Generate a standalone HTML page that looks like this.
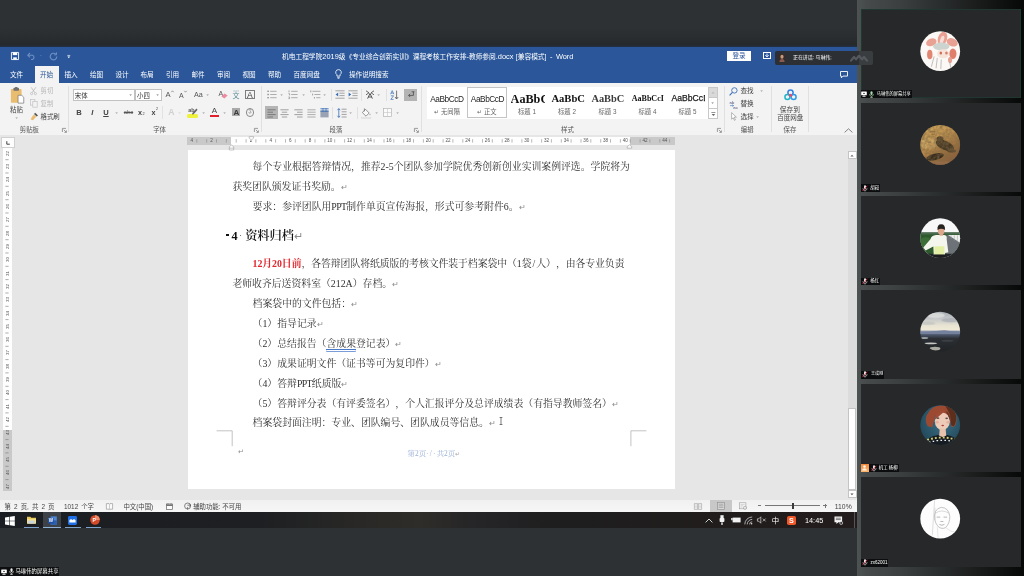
<!DOCTYPE html>
<html lang="zh-CN">
<head>
<meta charset="utf-8">
<title>Word - 屏幕共享</title>
<style>
html,body{margin:0;padding:0;background:#2d3134;}
#all{position:absolute;left:0;top:0;width:1024px;height:576px;overflow:hidden;filter:blur(0.5px);will-change:transform;}
body{width:1024px;height:576px;overflow:hidden;position:relative;background:#2d3134;
 font-family:"Liberation Sans","Noto Sans CJK SC",sans-serif;color:#333;}
.a{position:absolute;white-space:nowrap;}
.t{position:absolute;white-space:nowrap;line-height:1;}
svg{position:absolute;overflow:visible;}
/* word window */
#title{left:0;top:47px;width:857px;height:36px;background:#2b579a;}
#ribbon{left:0;top:83px;width:857px;height:52px;background:#f3f3f3;}
#docbg{left:0;top:135px;width:857px;height:365px;background:#e6e6e6;}
#page{left:188px;top:149.5px;width:486.5px;height:339px;background:#fff;}
#status{left:0;top:499.8px;width:857px;height:12.2px;background:linear-gradient(#f0f0f0,#f6f6f6);}
#taskbar{left:0;top:511.6px;width:857px;height:16.4px;background:#1d2023;}
.doc{font-family:"Liberation Serif","Noto Serif CJK SC",serif;font-size:9.85px;color:#303030;text-spacing-trim:space-all;}
.pm{color:#8a8a8a;font-size:7.6px;letter-spacing:0}
.tab{top:72.1px;font-size:6.6px;color:#fff;}
.rl{font-size:6.4px;color:#444;}
.gl{font-size:6.4px;color:#555;top:127.2px;}
.sep{position:absolute;top:86px;width:1px;height:46px;background:#e0e0e0;}
.st1{top:95px;font-size:8.3px;color:#262626;letter-spacing:-0.45px}
.st2{font-family:"Liberation Serif",serif;font-weight:bold;color:#111;}
.sl{top:109px;font-size:6.3px;color:#666;text-align:center}
.hr{top:138.6px;width:10px;text-align:center;font-size:4.6px;color:#555}
.vr{left:2px;width:10px;height:5px;line-height:5px;text-align:center;font-size:4.4px;color:#555;transform:rotate(-90deg)}
.sb{top:503.7px;font-size:6.4px;color:#444}
.la{font-size:7.4px}
/* right panel */
.nt{font-size:4.4px;color:#fff}

.av{position:absolute;left:920px;width:40px;height:40px;border-radius:50%;overflow:hidden;}
.nm{position:absolute;left:861px;height:8px;background:#0c0d0e;color:#fff;font-size:4.6px;line-height:8px;white-space:nowrap;}
</style>
</head>
<body>
<div id="all">
<!-- ===== top dark area ===== -->
<div class="a" style="left:0;top:0;width:857px;height:47px;background:linear-gradient(#2d3133 0,#2d3133 28px,#2a2d2f 38px,#26292c 45px,#20304a 47px)"></div>

<!-- ===== WORD WINDOW ===== -->
<div class="a" id="title"></div>
<div class="a" id="ribbon"></div>
<div class="a" id="docbg"></div>
<div class="a" id="page"></div>
<div class="a" id="status"></div>
<div class="a" id="taskbar"></div>


<!-- quick access icons -->
<svg style="left:11.4px;top:51.8px" width="8" height="8" viewBox="0 0 9 9"><path d="M0.5 0.5h8v8h-8z" fill="none" stroke="#fff" stroke-width="1"/><rect x="2" y="0.5" width="5" height="3" fill="#fff"/><rect x="2.5" y="6" width="4" height="2.5" fill="#fff"/></svg>
<svg style="left:27px;top:52px" width="9" height="8" viewBox="0 0 9 8"><path d="M1 3.2h4.5a2.3 2.3 0 0 1 0 4.3H4" fill="none" stroke="#6d8fc4" stroke-width="1.1"/><path d="M3 1L0.8 3.2L3 5.4" fill="none" stroke="#6d8fc4" stroke-width="1.1"/></svg>
<div class="t" style="left:40px;top:53px;font-size:5px;color:#6d8fc4">-</div>
<svg style="left:49px;top:51.5px" width="9" height="9" viewBox="0 0 9 9"><path d="M6.8 2.2A3.3 3.3 0 1 0 7.8 4.6" fill="none" stroke="#6d8fc4" stroke-width="1.1"/><path d="M7.5 0.4v2.4H5.2" fill="none" stroke="#6d8fc4" stroke-width="1"/></svg>
<svg style="left:66.6px;top:54.6px" width="3.6" height="3.6" viewBox="0 0 5 5"><path d="M0.5 0.6h4" stroke="#fff" stroke-width="0.9"/><path d="M0.6 2.2h3.8L2.5 4.4z" fill="#fff"/></svg>
<div class="t" style="left:282px;top:53px;font-size:6.73px;color:#fff;line-height:8px">机电工程学院<span class="la">2019</span>级《专业综合创新实训》课程考核工作安排<span class="la">-</span>教师参阅<span class="la">.docx</span><span style="padding-left:2.4px">[兼容模式]</span><span class="la" style="padding:0 3.4px 0 3.6px">-</span><span class="la">Word</span></div>
<div class="a" style="left:727px;top:50.5px;width:24px;height:10.5px;background:#fff"></div>
<div class="t" style="left:732.5px;top:52.6px;font-size:6.6px;color:#2b579a">登录</div>
<svg style="left:763px;top:52px" width="8" height="7" viewBox="0 0 8 7"><rect x="0.5" y="0.5" width="7" height="6" fill="none" stroke="#fff" stroke-width="1"/><path d="M2.3 3.2L4 4.9L5.7 3.2M4 1.6V4.6" fill="none" stroke="#fff" stroke-width="0.9"/></svg>
<!-- tabs -->
<div class="a" style="left:34.5px;top:66px;width:24px;height:17px;background:#f3f3f3"></div>
<div class="t tab" style="left:10px">文件</div>
<div class="t tab" style="left:40px;color:#2b579a">开始</div>
<div class="t tab" style="left:64.5px">插入</div>
<div class="t tab" style="left:90px">绘图</div>
<div class="t tab" style="left:115.5px">设计</div>
<div class="t tab" style="left:140.5px">布局</div>
<div class="t tab" style="left:166px">引用</div>
<div class="t tab" style="left:191.5px">邮件</div>
<div class="t tab" style="left:217px">审阅</div>
<div class="t tab" style="left:242.5px">视图</div>
<div class="t tab" style="left:268px">帮助</div>
<div class="t tab" style="left:293.5px">百度网盘</div>
<svg style="left:335px;top:68.5px" width="7" height="10" viewBox="0 0 7 10"><path d="M3.5 0.6a2.8 2.8 0 0 0-1.6 5.1v1.4h3.2V5.7A2.8 2.8 0 0 0 3.5 0.6z" fill="none" stroke="#fff" stroke-width="0.8"/><path d="M2.2 8.4h2.6M2.6 9.4h1.8" stroke="#fff" stroke-width="0.7"/></svg>
<div class="t tab" style="left:349px">操作说明搜索</div>
<svg style="left:840px;top:70.8px" width="8" height="8" viewBox="0 0 8 8"><path d="M0.5 0.5h7v4.6H3L1.4 6.8V5.1H0.5z" fill="none" stroke="#fff" stroke-width="0.9"/></svg>



<!-- ===== Clipboard group ===== -->
<svg style="left:10.4px;top:87px" width="15" height="16.6" viewBox="0 0 16 18">
 <rect x="0.8" y="2.2" width="11.6" height="15" rx="0.8" fill="#e9bd70"/>
 <rect x="3.6" y="0.8" width="6" height="3.2" rx="0.8" fill="#6f6f6f"/>
 <rect x="5.2" y="0" width="2.8" height="2" rx="0.8" fill="#6f6f6f"/>
 <path d="M8.6 9h4l2.2 2.2v6.3H8.6z" fill="#fff" stroke="#6a6a6a" stroke-width="0.7"/>
</svg>
<div class="t rl" style="left:10px;top:106.7px">粘贴</div>
<svg style="left:15.4px;top:116.8px" width="3.2" height="2.4" viewBox="0 0 4 3"><path d="M0.4 0.5L2 2.2L3.6 0.5z" fill="#959595"/></svg>
<!-- cut / copy / format painter -->
<svg style="left:30px;top:87px" width="7" height="8" viewBox="0 0 7 8"><path d="M1.2 0.3L4.8 5.6M5.8 0.3L2.2 5.6" stroke="#b9b9b9" stroke-width="0.8" fill="none"/><circle cx="1.6" cy="6.6" r="1.1" fill="none" stroke="#b9b9b9" stroke-width="0.7"/><circle cx="5.4" cy="6.6" r="1.1" fill="none" stroke="#b9b9b9" stroke-width="0.7"/></svg>
<div class="t rl" style="left:40.5px;top:88px;color:#b5b5b5">剪切</div>
<svg style="left:30px;top:99px" width="8" height="9" viewBox="0 0 8 9"><rect x="0.5" y="0.5" width="4.4" height="5.6" fill="#f3f3f3" stroke="#c2c2c2" stroke-width="0.7"/><rect x="2.8" y="2.6" width="4.4" height="5.6" fill="#f3f3f3" stroke="#c2c2c2" stroke-width="0.7"/></svg>
<div class="t rl" style="left:40.5px;top:100.5px;color:#b5b5b5">复制</div>
<svg style="left:30px;top:112px" width="9" height="9" viewBox="0 0 9 9"><path d="M5.2 0.8L8 3.4L6.6 4.6L4 2z" fill="#555"/><path d="M3.8 2.4L6.2 4.8L3 8.2L0.6 7.6L1.6 5.4z" fill="#e9bd70"/></svg>
<div class="t rl" style="left:40.5px;top:113.5px">格式刷</div>
<div class="t gl" style="left:19.8px">剪贴板</div>
<svg style="left:61.5px;top:128px" width="5" height="5" viewBox="0 0 5 5"><path d="M0.4 4V0.4H4" fill="none" stroke="#777" stroke-width="0.7"/><path d="M1.8 1.8L4.2 4.2M4.4 2.4V4.4H2.4" fill="none" stroke="#777" stroke-width="0.7"/></svg>
<div class="sep" style="left:68px"></div>

<!-- ===== Font group ===== -->
<div class="a" style="left:72.5px;top:89px;width:62px;height:12.2px;background:#fff;border:0.6px solid #c2c2c2;box-sizing:border-box"></div>
<div class="a" style="left:135px;top:89px;width:26.6px;height:12.2px;background:#fff;border:0.6px solid #c2c2c2;box-sizing:border-box"></div>
<div class="t rl" style="left:74.8px;top:92.7px;color:#333">宋体</div>
<svg style="left:129.4px;top:94.3px" width="3.2" height="2.4" viewBox="0 0 4 3"><path d="M0.4 0.5L2 2.2L3.6 0.5z" fill="#777"/></svg>
<div class="t rl" style="left:137px;top:92.7px;color:#333">小四</div>
<svg style="left:155.9px;top:94.3px" width="3.2" height="2.4" viewBox="0 0 4 3"><path d="M0.4 0.5L2 2.2L3.6 0.5z" fill="#777"/></svg>
<div class="t" style="left:165.5px;top:91px;font-size:7.6px;color:#555">A</div>
<svg style="left:171px;top:90px" width="3" height="3" viewBox="0 0 3 3"><path d="M0.3 2.2L1.5 0.8L2.7 2.2" fill="none" stroke="#666" stroke-width="0.6"/></svg>
<div class="t" style="left:179px;top:91.5px;font-size:7px;color:#555">A</div>
<svg style="left:184px;top:90px" width="3" height="3" viewBox="0 0 3 3"><path d="M0.3 0.8L1.5 2.2L2.7 0.8" fill="none" stroke="#666" stroke-width="0.6"/></svg>
<div class="t" style="left:194px;top:91.3px;font-size:7.2px;color:#555">Aa</div>
<svg style="left:205.9px;top:94.3px" width="3.2" height="2.4" viewBox="0 0 4 3"><path d="M0.4 0.5L2 2.2L3.6 0.5z" fill="#959595"/></svg>
<!-- clear formatting -->
<div class="t" style="left:218.5px;top:89.5px;font-size:7px;color:#555">A</div>
<svg style="left:221px;top:93px" width="7" height="6" viewBox="0 0 7 6"><path d="M3.6 0.4L6.6 2.4L3.4 5.6L0.4 3.6z" fill="#ec8aa0"/></svg>
<!-- phonetic guide -->
<div class="t" style="left:232.5px;top:91.5px;font-size:7px;color:#5a8a94;font-family:'Liberation Sans','Noto Sans CJK SC',sans-serif">文</div>
<svg style="left:232.5px;top:89.5px" width="7" height="2" viewBox="0 0 7 2"><path d="M0.5 1h6" stroke="#6a8f98" stroke-width="0.7" stroke-dasharray="1.2 0.8"/></svg>
<!-- char border -->
<div class="a" style="left:245.3px;top:90.3px;width:9.3px;height:9.2px;border:0.6px solid #7d7d7d;box-sizing:border-box"></div>
<div class="t" style="left:247.05px;top:90.7px;font-size:8.6px;color:#444">A</div>

<!-- row 2 -->
<div class="t" style="left:76.3px;top:108.6px;font-size:7.6px;font-weight:bold;color:#444">B</div>
<div class="t" style="left:91.3px;top:108.6px;font-size:7.6px;font-weight:bold;font-style:italic;color:#444">I</div>
<div class="t" style="left:103.2px;top:108.6px;font-size:7.6px;color:#444;font-weight:bold;text-decoration:underline">U</div>
<svg style="left:114.9px;top:112.3px" width="3.2" height="2.4" viewBox="0 0 4 3"><path d="M0.4 0.5L2 2.2L3.6 0.5z" fill="#959595"/></svg>
<div class="t" style="left:123.8px;top:110px;font-size:5.8px;color:#555;text-decoration:line-through;text-decoration-thickness:0.5px">abc</div>
<div class="t" style="left:138px;top:109px;font-size:7.2px;color:#444;font-weight:bold">x</div>
<div class="t" style="left:142.6px;top:113.3px;font-size:3.8px;color:#444">2</div>
<div class="t" style="left:151.4px;top:109px;font-size:7.2px;color:#444;font-weight:bold">x</div>
<div class="t" style="left:156px;top:107.5px;font-size:3.8px;color:#444">2</div>
<div class="a" style="left:162.3px;top:106px;width:1px;height:13px;background:#e2e2e2"></div>
<div class="t" style="left:168.2px;top:108.2px;font-size:8.6px;color:#cfcfcf;font-weight:bold">A</div>
<svg style="left:178.4px;top:112.3px" width="3.2" height="2.4" viewBox="0 0 4 3"><path d="M0.4 0.5L2 2.2L3.6 0.5z" fill="#d2d2d2"/></svg>
<!-- highlight -->
<div class="a" style="left:187.3px;top:114.4px;width:10.8px;height:3.6px;background:#eef23a;border-radius:1.5px"></div>
<div class="t" style="left:188.2px;top:107.6px;font-size:5.4px;color:#555;font-weight:bold">ab</div>
<svg style="left:190px;top:108px" width="8" height="8" viewBox="0 0 8 8"><path d="M6.4 0.6L7.6 1.8L3.6 6.2L2 6.6L2.4 5z" fill="#666"/></svg>
<svg style="left:201.6px;top:112.3px" width="3.2" height="2.4" viewBox="0 0 4 3"><path d="M0.4 0.5L2 2.2L3.6 0.5z" fill="#959595"/></svg>
<!-- font color -->
<div class="t" style="left:211.7px;top:107.2px;font-size:8px;color:#444">A</div>
<div class="a" style="left:210px;top:114.8px;width:9.4px;height:2.4px;background:#e0202c"></div>
<svg style="left:223.1px;top:112.3px" width="3.2" height="2.4" viewBox="0 0 4 3"><path d="M0.4 0.5L2 2.2L3.6 0.5z" fill="#959595"/></svg>
<!-- char shading -->
<div class="a" style="left:232.4px;top:108px;width:7.8px;height:8.4px;background:#a9a9a9"></div>
<div class="t" style="left:233.4px;top:108.6px;font-size:8px;color:#3a3a3a;font-weight:bold">A</div>
<!-- enclosed char -->
<div class="a" style="left:245.6px;top:108.2px;width:8.6px;height:8.6px;border:0.7px solid #8a8a8a;border-radius:50%;box-sizing:border-box"></div>
<div class="t" style="left:247.7px;top:110.2px;font-size:4.6px;color:#777">字</div>
<div class="t gl" style="left:153.2px">字体</div>
<svg style="left:253.5px;top:128px" width="5" height="5" viewBox="0 0 5 5"><path d="M0.4 4V0.4H4" fill="none" stroke="#777" stroke-width="0.7"/><path d="M1.8 1.8L4.2 4.2M4.4 2.4V4.4H2.4" fill="none" stroke="#777" stroke-width="0.7"/></svg>
<div class="sep" style="left:260.5px"></div>
<!-- ===== Paragraph group ===== -->
<!-- bullets -->
<svg style="left:266.5px;top:90px" width="10" height="9" viewBox="0 0 10 9"><g fill="#8a8a8a"><rect x="0.4" y="0.6" width="1.4" height="1.4"/><rect x="0.4" y="3.8" width="1.4" height="1.4"/><rect x="0.4" y="7" width="1.4" height="1.4"/></g><path d="M3.2 1.3h6.4M3.2 4.5h6.4M3.2 7.7h6.4" stroke="#9a9a9a" stroke-width="0.8"/></svg>
<svg style="left:280.0px;top:94.3px" width="3.2" height="2.4" viewBox="0 0 4 3"><path d="M0.4 0.5L2 2.2L3.6 0.5z" fill="#959595"/></svg>
<!-- numbering -->
<svg style="left:288px;top:90px" width="10" height="9" viewBox="0 0 10 9"><path d="M1 0.4v1.9M0.4 3.7h1.2v1.7M0.4 7h1.2v1.6H0.4" fill="none" stroke="#7a7a7a" stroke-width="0.6"/><path d="M3.2 1.3h6.4M3.2 4.5h6.4M3.2 7.7h6.4" stroke="#9a9a9a" stroke-width="0.8"/></svg>
<svg style="left:301.9px;top:94.3px" width="3.2" height="2.4" viewBox="0 0 4 3"><path d="M0.4 0.5L2 2.2L3.6 0.5z" fill="#959595"/></svg>
<!-- multilevel -->
<svg style="left:309.5px;top:90px" width="11" height="9" viewBox="0 0 11 9"><path d="M0.8 0.4v1.9M2.6 3.6v1.8M4.4 7v1.6" stroke="#7a7a7a" stroke-width="0.7"/><path d="M2.4 1.3h8M4.4 4.5h6M6.2 7.7h4.2" stroke="#9a9a9a" stroke-width="0.8"/></svg>
<svg style="left:322.6px;top:94.3px" width="3.2" height="2.4" viewBox="0 0 4 3"><path d="M0.4 0.5L2 2.2L3.6 0.5z" fill="#959595"/></svg>
<div class="a" style="left:331px;top:88.5px;width:1px;height:12.5px;background:#e0e0e0"></div>
<!-- decrease / increase indent -->
<svg style="left:334.5px;top:90px" width="10" height="9" viewBox="0 0 10 9"><path d="M0.4 0.8h9.2M4.4 3.2h5.2M4.4 5.6h5.2M0.4 8.2h9.2" stroke="#8e8e8e" stroke-width="0.8"/><path d="M3.2 2.6v3.8L0.6 4.5z" fill="#3a6fb5"/></svg>
<svg style="left:347.8px;top:90px" width="10" height="9" viewBox="0 0 10 9"><path d="M0.4 0.8h9.2M4.4 3.2h5.2M4.4 5.6h5.2M0.4 8.2h9.2" stroke="#8e8e8e" stroke-width="0.8"/><path d="M0.6 2.6v3.8L3.2 4.5z" fill="#3a6fb5"/></svg>
<div class="a" style="left:361px;top:88.5px;width:1px;height:12.5px;background:#e0e0e0"></div>
<!-- asian layout -->
<svg style="left:365px;top:90px" width="10" height="9" viewBox="0 0 10 9"><path d="M1 0.8L4 2.8L1 4.8M9 0.8L6 2.8L9 4.8" fill="none" stroke="#444" stroke-width="0.8"/><path d="M2.6 8.6L5 3.4L7.4 8.6M3.4 7h3.2" fill="none" stroke="#444" stroke-width="0.9"/></svg>
<svg style="left:377.0px;top:94.3px" width="3.2" height="2.4" viewBox="0 0 4 3"><path d="M0.4 0.5L2 2.2L3.6 0.5z" fill="#959595"/></svg>
<div class="a" style="left:385.5px;top:88.5px;width:1px;height:12.5px;background:#e0e0e0"></div>
<!-- sort -->
<svg style="left:390px;top:89.5px" width="9" height="10" viewBox="0 0 9 10"><path d="M0.6 4.2L2.2 0.6L3.8 4.2M1.1 3.1h2.2" fill="none" stroke="#3a6fb5" stroke-width="0.7"/><path d="M0.8 5.8h2.8L0.8 9.4h2.8" fill="none" stroke="#3a6fb5" stroke-width="0.7"/><path d="M6.6 0.6v8.2M5 7L6.6 9L8.2 7" fill="none" stroke="#555" stroke-width="0.8"/></svg>
<!-- show marks (active) -->
<div class="a" style="left:404.2px;top:88.7px;width:12.6px;height:12.6px;background:#b4b4b4"></div>
<svg style="left:406.5px;top:91px" width="8" height="8" viewBox="0 0 8 8"><path d="M6.4 0.8V4.4H1.6M3.2 2.8L1.6 4.4L3.2 6" fill="none" stroke="#4a4a4a" stroke-width="0.8"/><path d="M4.6 0.8h2.8" stroke="#4a4a4a" stroke-width="0.8"/></svg>

<!-- row 2 -->
<div class="a" style="left:265.1px;top:106px;width:12.8px;height:13.4px;background:#b4b4b4"></div>
<svg style="left:267px;top:108.5px" width="9" height="9" viewBox="0 0 9 9"><path d="M0.4 0.8h8.2M0.4 3.2h5.6M0.4 5.6h8.2M0.4 8h5.6" stroke="#6a6a6a" stroke-width="0.8"/></svg>
<svg style="left:280px;top:108.5px" width="9" height="9" viewBox="0 0 9 9"><path d="M0.4 0.8h8.2M1.8 3.2h5.4M0.4 5.6h8.2M1.8 8h5.4" stroke="#8a8a8a" stroke-width="0.8"/></svg>
<svg style="left:293.7px;top:108.5px" width="9" height="9" viewBox="0 0 9 9"><path d="M0.4 0.8h8.2M3 3.2h5.6M0.4 5.6h8.2M3 8h5.6" stroke="#8a8a8a" stroke-width="0.8"/></svg>
<svg style="left:306.9px;top:108.5px" width="9" height="9" viewBox="0 0 9 9"><path d="M0.4 0.8h8.2M0.4 3.2h8.2M0.4 5.6h8.2M0.4 8h8.2" stroke="#9a9a9a" stroke-width="0.8"/></svg>
<svg style="left:320px;top:108px" width="9" height="10" viewBox="0 0 9 10"><rect x="0.4" y="2.4" width="8.2" height="7" fill="#9aa3b4"/><path d="M0.4 0.8h8.2M0.4 3.2h8.2" stroke="#3a6fb5" stroke-width="0.9"/><path d="M3 0v4M6 0v4" stroke="#3a6fb5" stroke-width="0.7"/></svg>
<div class="a" style="left:331.8px;top:106.5px;width:1px;height:12.5px;background:#e0e0e0"></div>
<!-- line spacing -->
<svg style="left:336.5px;top:108px" width="10" height="10" viewBox="0 0 10 10"><path d="M1.8 0.6v8.8M0.4 2.2L1.8 0.6L3.2 2.2M0.4 7.8L1.8 9.4L3.2 7.8" fill="none" stroke="#3a6fb5" stroke-width="0.8"/><path d="M4.6 1.2h5M4.6 3.8h5M4.6 6.4h5M4.6 9h5" stroke="#8a8a8a" stroke-width="0.8"/></svg>
<svg style="left:348.8px;top:112.3px" width="3.2" height="2.4" viewBox="0 0 4 3"><path d="M0.4 0.5L2 2.2L3.6 0.5z" fill="#959595"/></svg>
<div class="a" style="left:357px;top:106.5px;width:1px;height:12.5px;background:#e0e0e0"></div>
<!-- shading bucket -->
<svg style="left:361px;top:107.5px" width="11" height="11" viewBox="0 0 11 11"><path d="M4.4 1.2L8.2 5L5 8.2L1.4 4.6z" fill="#fafafa" stroke="#6a6a6a" stroke-width="0.7"/><path d="M3.4 0.4v3" stroke="#6a6a6a" stroke-width="0.7"/><path d="M9 5.6q1 1.4 0 2q-1-0.6 0-2z" fill="#8a8a8a"/><rect x="0.6" y="9.2" width="9.4" height="1.6" fill="#ececec" stroke="#cfcfcf" stroke-width="0.3"/></svg>
<svg style="left:374.8px;top:112.3px" width="3.2" height="2.4" viewBox="0 0 4 3"><path d="M0.4 0.5L2 2.2L3.6 0.5z" fill="#959595"/></svg>
<!-- borders -->
<svg style="left:383.3px;top:108.3px" width="9" height="9" viewBox="0 0 9 9"><rect x="0.5" y="0.5" width="8" height="8" fill="#fbfbfb" stroke="#b4b4b4" stroke-width="0.7"/><path d="M4.5 0.5v8M0.5 4.5h8" stroke="#c4c4c4" stroke-width="0.6"/></svg>
<svg style="left:396.4px;top:112.3px" width="3.2" height="2.4" viewBox="0 0 4 3"><path d="M0.4 0.5L2 2.2L3.6 0.5z" fill="#959595"/></svg>
<div class="t gl" style="left:329.6px">段落</div>
<svg style="left:414px;top:128px" width="5" height="5" viewBox="0 0 5 5"><path d="M0.4 4V0.4H4" fill="none" stroke="#777" stroke-width="0.7"/><path d="M1.8 1.8L4.2 4.2M4.4 2.4V4.4H2.4" fill="none" stroke="#777" stroke-width="0.7"/></svg>
<div class="sep" style="left:420.6px"></div>
<!-- ===== Styles group ===== -->
<div class="a" style="left:426.5px;top:87px;width:281.5px;height:32.3px;background:#fff"></div>
<div class="a" style="left:708px;top:87px;width:9.5px;height:32.3px;background:#fff;border:0.6px solid #c8c8c8;box-sizing:border-box"></div>
<div class="a" style="left:708px;top:87px;width:9.5px;height:10.8px;background:#d9d9d9;border:0.6px solid #c8c8c8;box-sizing:border-box"></div>
<div class="a" style="left:708px;top:108.4px;width:9.5px;height:0.6px;background:#c8c8c8"></div>
<svg style="left:710.7px;top:91px" width="4" height="3" viewBox="0 0 4 3"><path d="M0.4 2.4L2 0.7L3.6 2.4z" fill="#b9b9b9"/></svg>
<svg style="left:711.1px;top:102.3px" width="3.2" height="2.4" viewBox="0 0 4 3"><path d="M0.4 0.5L2 2.2L3.6 0.5z" fill="#777"/></svg>
<svg style="left:710.5px;top:111.5px" width="5" height="5" viewBox="0 0 5 5"><path d="M0.4 0.5h4" stroke="#666" stroke-width="0.7"/><path d="M0.6 2L2.4 4L4.2 2z" fill="#666"/></svg>
<div class="a" style="left:467.3px;top:87.3px;width:39.8px;height:30.6px;border:1.4px solid #c4c4c4;box-sizing:border-box"></div>
<div class="t st1" style="left:430.2px">AaBbCcD</div>
<div class="t st1" style="left:470.8px">AaBbCcD</div>
<div class="t st2" style="left:510.6px;font-size:12.2px;top:93.4px;width:34px;overflow:hidden">AaBbC</div>
<div class="t st2" style="left:551.4px;font-size:10.6px;top:94.2px">AaBbC</div>
<div class="t st2" style="left:591.4px;font-size:10.4px;top:94.4px;color:#3c3c3c;font-weight:bold">AaBbC</div>
<div class="t st2" style="left:631.8px;font-size:8px;top:95px">AaBbCcI</div>
<div class="t" style="left:671.4px;font-size:8.6px;top:94.2px;color:#222;width:33.6px;overflow:hidden;letter-spacing:0.05px;-webkit-text-stroke:0.25px #222">AaBbCcD</div>
<div class="t sl" style="left:427px;width:40px">↵ 无间隔</div>
<div class="t sl" style="left:467px;width:40px">↵ 正文</div>
<div class="t sl" style="left:507px;width:40px">标题 1</div>
<div class="t sl" style="left:547px;width:40px">标题 2</div>
<div class="t sl" style="left:587.5px;width:40px">标题 3</div>
<div class="t sl" style="left:627.5px;width:40px">标题 4</div>
<div class="t sl" style="left:667.5px;width:40px">标题 5</div>
<div class="t gl" style="left:561px">样式</div>
<svg style="left:716.5px;top:128px" width="5" height="5" viewBox="0 0 5 5"><path d="M0.4 4V0.4H4" fill="none" stroke="#777" stroke-width="0.7"/><path d="M1.8 1.8L4.2 4.2M4.4 2.4V4.4H2.4" fill="none" stroke="#777" stroke-width="0.7"/></svg>
<div class="sep" style="left:723.5px"></div>

<!-- ===== Editing group ===== -->
<svg style="left:729px;top:86.5px" width="9" height="9" viewBox="0 0 9 9"><circle cx="5.4" cy="3.4" r="2.7" fill="none" stroke="#3a6fb5" stroke-width="0.9"/><path d="M3.4 5.4L0.6 8.4" stroke="#3a6fb5" stroke-width="1.1"/></svg>
<div class="t rl" style="left:740.4px;top:87.6px;font-size:6.6px">查找</div>
<svg style="left:760.1px;top:90.3px" width="3.2" height="2.4" viewBox="0 0 4 3"><path d="M0.4 0.5L2 2.2L3.6 0.5z" fill="#959595"/></svg>
<svg style="left:729px;top:99.5px" width="9" height="9" viewBox="0 0 9 9"><text x="0.4" y="4" font-size="4.2" font-family="Liberation Sans, sans-serif" fill="#7a7a9a" font-weight="bold">ab</text><path d="M1 5.6h3.4M3.4 4.6L4.6 5.6L3.4 6.6" fill="none" stroke="#3a6fb5" stroke-width="0.6"/><text x="4.2" y="8.8" font-size="4.2" font-family="Liberation Sans, sans-serif" fill="#7a7a9a" font-weight="bold">ac</text></svg>
<div class="t rl" style="left:740.4px;top:100.6px;font-size:6.6px">替换</div>
<svg style="left:731px;top:112px" width="6" height="9" viewBox="0 0 6 9"><path d="M0.6 0.6v6.6l1.6-1.4l1.2 2.6l1-0.5L3.2 5.2h2.2z" fill="#fff" stroke="#8a8a8a" stroke-width="0.6"/></svg>
<div class="t rl" style="left:740.4px;top:113.6px;font-size:6.6px">选择</div>
<svg style="left:756.1px;top:116.3px" width="3.2" height="2.4" viewBox="0 0 4 3"><path d="M0.4 0.5L2 2.2L3.6 0.5z" fill="#959595"/></svg>
<div class="t gl" style="left:740.8px">编辑</div>
<div class="sep" style="left:771px"></div>

<!-- ===== Save group ===== -->
<svg style="left:783.5px;top:89px" width="13" height="12" viewBox="0 0 13 12">
 <circle cx="6.5" cy="3.6" r="2.6" fill="none" stroke="#2f7fe6" stroke-width="1.5"/>
 <circle cx="3.4" cy="8" r="2.5" fill="none" stroke="#22b3c8" stroke-width="1.5"/>
 <circle cx="9.6" cy="8" r="2.5" fill="none" stroke="#2f9be6" stroke-width="1.5"/>
 <circle cx="6.5" cy="6.2" r="1.5" fill="#f2456b"/>
</svg>
<div class="t rl" style="left:779.8px;top:106.8px;font-size:6.7px">保存到</div>
<div class="t rl" style="left:777.2px;top:115.4px;font-size:6.5px">百度网盘</div>
<div class="t gl" style="left:783.6px">保存</div>
<div class="sep" style="left:808.3px"></div>
<svg style="left:843.5px;top:127.5px" width="9" height="5" viewBox="0 0 9 5"><path d="M0.6 4.4L4.5 0.8L8.4 4.4" fill="none" stroke="#777" stroke-width="0.9"/></svg>



<!-- ===== Rulers ===== -->
<div class="a" style="left:1px;top:136.5px;width:13.5px;height:11.5px;background:#fdfdfd;border:0.6px solid #d0d0d0;box-sizing:border-box"></div>
<svg style="left:5.5px;top:140.5px" width="4" height="4" viewBox="0 0 4 4"><path d="M0.8 0.2V3.2H3.8" fill="none" stroke="#444" stroke-width="1"/></svg>
<div class="a" style="left:187px;top:137px;width:488px;height:8px;background:#c9c9c9"></div>
<div class="a" style="left:231px;top:137px;width:398.5px;height:8px;background:#fefefe"></div>
<div class="t hr" style="left:186.9px">4</div>
<div class="t hr" style="left:206.6px">2</div>
<div class="t hr" style="left:246.0px">2</div>
<div class="t hr" style="left:265.7px">4</div>
<div class="t hr" style="left:285.4px">6</div>
<div class="t hr" style="left:305.1px">8</div>
<div class="t hr" style="left:324.8px">10</div>
<div class="t hr" style="left:344.5px">12</div>
<div class="t hr" style="left:364.2px">14</div>
<div class="t hr" style="left:383.9px">16</div>
<div class="t hr" style="left:403.6px">18</div>
<div class="t hr" style="left:423.3px">20</div>
<div class="t hr" style="left:443.0px">22</div>
<div class="t hr" style="left:462.7px">24</div>
<div class="t hr" style="left:482.4px">26</div>
<div class="t hr" style="left:502.1px">28</div>
<div class="t hr" style="left:521.8px">30</div>
<div class="t hr" style="left:541.5px">32</div>
<div class="t hr" style="left:561.2px">34</div>
<div class="t hr" style="left:580.9px">36</div>
<div class="t hr" style="left:600.6px">38</div>
<div class="t hr" style="left:620.3px">40</div>
<div class="t hr" style="left:640.0px">42</div>
<div class="t hr" style="left:659.7px">44</div>
<svg style="left:0;top:0" width="857" height="150" viewBox="0 0 857 150"><path d="M196.8 139.2v3.4M206.7 139.2v3.4M216.5 139.2v3.4M226.4 139.2v3.4M236.2 139.2v3.4M246.1 139.2v3.4M255.9 139.2v3.4M265.8 139.2v3.4M275.6 139.2v3.4M285.5 139.2v3.4M295.3 139.2v3.4M305.2 139.2v3.4M315.0 139.2v3.4M324.9 139.2v3.4M334.7 139.2v3.4M344.6 139.2v3.4M354.4 139.2v3.4M364.3 139.2v3.4M374.1 139.2v3.4M384.0 139.2v3.4M393.8 139.2v3.4M403.7 139.2v3.4M413.5 139.2v3.4M423.4 139.2v3.4M433.2 139.2v3.4M443.1 139.2v3.4M452.9 139.2v3.4M462.8 139.2v3.4M472.6 139.2v3.4M482.5 139.2v3.4M492.3 139.2v3.4M502.2 139.2v3.4M512.0 139.2v3.4M521.9 139.2v3.4M531.7 139.2v3.4M541.6 139.2v3.4M551.4 139.2v3.4M561.3 139.2v3.4M571.1 139.2v3.4M581.0 139.2v3.4M590.8 139.2v3.4M600.7 139.2v3.4M610.5 139.2v3.4M620.4 139.2v3.4M630.2 139.2v3.4M640.1 139.2v3.4M649.9 139.2v3.4M659.8 139.2v3.4M669.6 139.2v3.4" stroke="#8a8a8a" stroke-width="0.6"/><path d="M249.2 136.6h4.4v1.6l-2.2 1.8l-2.2-1.8z" fill="#fcfcfc" stroke="#8f8f8f" stroke-width="0.5"/><path d="M229.3 146.8l2.2-1.8l2.2 1.8v3.2h-4.4z" fill="#fcfcfc" stroke="#8f8f8f" stroke-width="0.5"/><path d="M229.3 148.2h4.4" stroke="#8f8f8f" stroke-width="0.5"/><path d="M627.3 146.6l2.2-1.8l2.2 1.8v1.6h-4.4z" fill="#fcfcfc" stroke="#8f8f8f" stroke-width="0.5"/></svg>
<div class="a" style="left:2.5px;top:148px;width:9px;height:342.5px;background:#c9c9c9"></div>
<div class="a" style="left:2.5px;top:148px;width:9px;height:282.2px;background:#fefefe"></div>
<div class="t vr" style="top:150.5px">22</div>
<div class="t vr" style="top:163.8px">23</div>
<div class="t vr" style="top:177.2px">24</div>
<div class="t vr" style="top:190.5px">25</div>
<div class="t vr" style="top:203.8px">26</div>
<div class="t vr" style="top:217.2px">27</div>
<div class="t vr" style="top:230.5px">28</div>
<div class="t vr" style="top:243.8px">29</div>
<div class="t vr" style="top:257.1px">30</div>
<div class="t vr" style="top:270.5px">31</div>
<div class="t vr" style="top:283.8px">32</div>
<div class="t vr" style="top:297.1px">33</div>
<div class="t vr" style="top:310.5px">34</div>
<div class="t vr" style="top:323.8px">35</div>
<div class="t vr" style="top:337.1px">36</div>
<div class="t vr" style="top:350.4px">37</div>
<div class="t vr" style="top:363.8px">38</div>
<div class="t vr" style="top:377.1px">39</div>
<div class="t vr" style="top:390.4px">40</div>
<div class="t vr" style="top:403.8px">41</div>
<div class="t vr" style="top:417.1px">42</div>
<div class="t vr" style="top:430.4px">43</div>
<div class="t vr" style="top:443.8px">44</div>
<div class="t vr" style="top:457.1px">45</div>
<div class="t vr" style="top:470.4px">46</div>
<div class="t vr" style="top:483.8px">47</div>
<svg style="left:0;top:0" width="20" height="500" viewBox="0 0 20 500"><path d="M5.4 159.7h3.2M5.4 173.0h3.2M5.4 186.3h3.2M5.4 199.7h3.2M5.4 213.0h3.2M5.4 226.3h3.2M5.4 239.7h3.2M5.4 253.0h3.2M5.4 266.3h3.2M5.4 279.6h3.2M5.4 293.0h3.2M5.4 306.3h3.2M5.4 319.6h3.2M5.4 333.0h3.2M5.4 346.3h3.2M5.4 359.6h3.2M5.4 372.9h3.2M5.4 386.3h3.2M5.4 399.6h3.2M5.4 412.9h3.2M5.4 426.3h3.2M5.4 439.6h3.2M5.4 452.9h3.2M5.4 466.3h3.2M5.4 479.6h3.2" stroke="#777" stroke-width="0.6"/></svg>

<!-- ===== Document text ===== -->
<div class="t doc" style="left:252.6px;top:162.3px">每个专业根据答辩情况，推荐2-5个团队参加学院优秀创新创业实训案例评选。学院将为</div>
<div class="t doc" style="left:232.4px;top:182.1px">获奖团队颁发证书奖励。<span class="pm">↵</span></div>
<div class="t doc" style="left:252.6px;top:201.8px">要求：参评团队用<span style="letter-spacing:-0.7px">PPT</span>制作单页宣传海报，形式可参考附件6。<span class="pm">↵</span></div>
<div class="a" style="left:226.4px;top:234px;width:2.2px;height:2.2px;background:#111"></div>
<div class="t doc" style="left:231.6px;top:229.6px;font-size:12.2px;font-weight:600;color:#111">4<span style="font-size:8px;vertical-align:1.5px;font-weight:normal;padding:0 3.2px 0 1.6px">·</span>资料归档<span class="pm" style="font-weight:normal;font-size:11px">↵</span></div>
<div class="t doc" style="left:252.6px;top:259.4px;letter-spacing:-0.055px"><span style="color:#e2262d;font-weight:bold">12月20日前</span>，各答辩团队将纸质版的考核文件装于档案袋中（1袋<span style="padding:0 1.1px">/</span>人），由各专业负责</div>
<div class="t doc" style="left:232.4px;top:279.2px">老师收齐后送资料室（212A）存档。<span class="pm">↵</span></div>
<div class="t doc" style="left:252.6px;top:299.1px">档案袋中的文件包括：<span class="pm">↵</span></div>
<div class="t doc" style="left:252.6px;top:318.9px">（1）指导记录<span class="pm">↵</span></div>
<div class="t doc" style="left:252.6px;top:338.8px">（2）总结报告（<span style="border-bottom:0.9px solid #4a78c8;box-shadow:0 1.5px 0 -0.3px #fff,0 2.2px 0 -0.3px #4a78c8;line-height:0.9;display:inline-block">含成果</span>登记表）<span class="pm">↵</span></div>
<div class="t doc" style="left:252.6px;top:358.6px">（3）成果证明文件（证书等可为复印件）<span class="pm">↵</span></div>
<div class="t doc" style="left:252.6px;top:378.5px">（4）答辩<span style="letter-spacing:-0.7px">PPT</span>纸质版<span class="pm">↵</span></div>
<div class="t doc" style="left:252.6px;top:398.6px">（5）答辩评分表（有评委签名），个人汇报评分及总评成绩表（有指导教师签名）<span class="pm">↵</span></div>
<div class="t doc" style="left:252.6px;top:418.2px">档案袋封面注明：专业、团队编号、团队成员等信息。<span class="pm">↵</span></div>
<!-- I-beam cursor -->
<svg style="left:499px;top:416.5px" width="4" height="8" viewBox="0 0 4 8"><path d="M0.6 0.5h2.8M0.6 7.5h2.8M2 0.5v7" stroke="#444" stroke-width="0.7" fill="none"/></svg>
<!-- margin crop marks -->
<svg style="left:0;top:0" width="857" height="500" viewBox="0 0 857 500"><path d="M216.6 430.8H232.2V446.2M646.4 430.8H630.9V446.2" fill="none" stroke="#b4b4b4" stroke-width="0.8"/></svg>
<div class="t doc pm" style="left:237.6px;top:447.8px;font-size:7.4px">↵</div>
<div class="t doc" style="left:407.6px;top:450.2px;font-size:7.4px;color:#9ab0d6">第2页<span style="letter-spacing:1.2px">·/·</span>共2页<span style="color:#a8a8a8;font-size:6px">↵</span></div>
<!-- vertical scrollbar -->
<div class="a" style="left:848px;top:151px;width:9px;height:347px;background:#dcdcdc"></div>
<div class="a" style="left:848px;top:151.3px;width:8.5px;height:8.2px;background:#fff;border:0.6px solid #c4c4c4;box-sizing:border-box"></div>
<svg style="left:850.3px;top:154px" width="4" height="3" viewBox="0 0 4 3"><path d="M0.4 2.4L2 0.7L3.6 2.4z" fill="#666"/></svg>
<div class="a" style="left:848px;top:408.2px;width:8.3px;height:82px;background:#fff;border:0.6px solid #c4c4c4;box-sizing:border-box"></div>
<div class="a" style="left:848px;top:490px;width:8.5px;height:8.2px;background:#fff;border:0.6px solid #c4c4c4;box-sizing:border-box"></div>
<svg style="left:850.3px;top:493px" width="4" height="3" viewBox="0 0 4 3"><path d="M0.4 0.5L2 2.2L3.6 0.5z" fill="#555"/></svg>

<!-- ===== Status bar ===== -->
<div class="t sb" style="left:4.6px;word-spacing:1.3px">第 2 页, 共 2 页</div>
<div class="t sb" style="left:64px;word-spacing:1.2px">1012 个字</div>
<svg style="left:106px;top:502.5px" width="7" height="7" viewBox="0 0 7 7"><path d="M0.4 0.6h2.6l0.5 0.6l0.5-0.6h2.6v5.6H4l-0.5 0.5L3 6.2H0.4z" fill="#fbfbfb" stroke="#8a8a8a" stroke-width="0.6"/><path d="M3.5 1.2v5" stroke="#9a9a9a" stroke-width="0.5"/></svg>
<div class="t sb" style="left:123.4px">中文(中国)</div>
<svg style="left:166px;top:502.5px" width="7" height="7" viewBox="0 0 7 7"><rect x="0.5" y="1" width="6" height="5.4" fill="#fbfbfb" stroke="#666" stroke-width="0.7"/><path d="M0.5 2.2h6" stroke="#555" stroke-width="1.2"/><path d="M2 0.3v1.2M5 0.3v1.2" stroke="#555" stroke-width="0.6"/></svg>
<svg style="left:183.5px;top:502px" width="9" height="8" viewBox="0 0 9 8"><circle cx="3.6" cy="4" r="3" fill="none" stroke="#555" stroke-width="0.7"/><path d="M3.4 3.2h3.4M5.4 1.8L6.9 3.2L5.4 4.6" fill="none" stroke="#555" stroke-width="0.7"/><path d="M3.6 5v2.6" stroke="#555" stroke-width="0.7"/></svg>
<div class="t sb" style="left:193.2px">辅助功能: 不可用</div>
<!-- view buttons -->
<svg style="left:694px;top:502.5px" width="8" height="7" viewBox="0 0 8 7"><path d="M0.4 0.6h3.2v5.8H0.4zM4.4 0.6h3.2v5.8H4.4z" fill="#fbfbfb" stroke="#9a9a9a" stroke-width="0.6"/><path d="M1 2h2M1 3.4h2M1 4.8h2M5 2h2M5 3.4h2M5 4.8h2" stroke="#b5b5b5" stroke-width="0.5"/></svg>
<div class="a" style="left:709.7px;top:499.6px;width:22px;height:12px;background:#c8c8c8"></div>
<svg style="left:717px;top:502px" width="8" height="8" viewBox="0 0 8 8"><rect x="0.5" y="0.5" width="7" height="7" fill="#d8d8d8" stroke="#8a8a8a" stroke-width="0.6"/><path d="M1.6 2.2h4.8M1.6 3.8h4.8M1.6 5.4h4.8" stroke="#8a8a8a" stroke-width="0.6"/></svg>
<svg style="left:739px;top:502px" width="8" height="8" viewBox="0 0 8 8"><rect x="0.5" y="0.8" width="6.4" height="6" fill="#fbfbfb" stroke="#9a9a9a" stroke-width="0.6"/><path d="M1.4 2.4h4.4M1.4 3.8h3M1.4 5.2h2" stroke="#aaa" stroke-width="0.5"/><circle cx="6" cy="5.8" r="1.6" fill="#e8e8e8" stroke="#888" stroke-width="0.5"/></svg>
<!-- zoom slider -->
<div class="a" style="left:757.6px;top:505.4px;width:3.6px;height:0.7px;background:#777"></div>
<div class="a" style="left:764.7px;top:505.4px;width:55.5px;height:0.7px;background:#777"></div>
<div class="a" style="left:791.8px;top:502.6px;width:2px;height:6.4px;background:#3a3a3a"></div>
<div class="a" style="left:823px;top:505.4px;width:4px;height:0.7px;background:#777"></div>
<div class="a" style="left:824.65px;top:503.7px;width:0.7px;height:4px;background:#777"></div>
<div class="t sb" style="left:834.8px;font-size:6.8px;top:503.5px">110%</div>

<!-- ===== Taskbar ===== -->
<div class="a" style="left:0;top:511.6px;width:857px;height:16.4px;background:linear-gradient(90deg,#1b1e22 0,#1d1f22 30%,#292826 42%,#2f2d29 49%,#262527 55%,#1e1e1f 65%,#201d1d 78%,#231c1c 100%)"></div>
<!-- windows logo -->
<svg style="left:4.7px;top:515.8px" width="10" height="10" viewBox="0 0 10 10"><path d="M0 1.4L4.4 0.8V4.7H0zM5 0.7L9.8 0V4.7H5zM0 5.3H4.4V9.2L0 8.6zM5 5.3H9.8V10L5 9.3z" fill="#fff"/></svg>
<!-- explorer -->
<svg style="left:27.3px;top:516.4px" width="9" height="8" viewBox="0 0 9 8"><path d="M0 0.8h3.4l0.8 1H9V7.6H0z" fill="#e6c65a"/><rect x="0" y="2.8" width="9" height="4.8" fill="#f3df86"/><rect x="1.2" y="4.6" width="6.6" height="3" fill="#c9d3de"/></svg>
<div class="a" style="left:24.2px;top:527px;width:15.2px;height:1.2px;background:#7da3cc"></div>
<!-- word (active) -->
<div class="a" style="left:43px;top:511.6px;width:18px;height:16.6px;background:#3c4248"></div>
<svg style="left:47.6px;top:516px" width="9" height="9" viewBox="0 0 9 9"><rect x="2.6" y="0.4" width="6.2" height="8.2" fill="#4f86d6"/><rect x="2.6" y="4.4" width="6.2" height="4.2" fill="#2b5fb0"/><rect x="0" y="1.8" width="5.6" height="5.6" fill="#1e4fa0"/><text x="0.7" y="6.3" font-size="4.6" font-weight="bold" font-family="Liberation Sans, sans-serif" fill="#fff">W</text></svg>
<div class="a" style="left:43px;top:527px;width:18px;height:1.2px;background:#8fb2d8"></div>
<!-- tencent meeting -->
<svg style="left:68.4px;top:516px" width="9" height="9" viewBox="0 0 9 9"><rect x="0" y="0" width="9" height="9" rx="1.4" fill="#1f6fe8"/><path d="M1.4 6.4V4.6a1.6 1.6 0 0 1 3.1-0.4a1.6 1.6 0 0 1 3.1 0.4V6.4z" fill="#fff"/></svg>
<div class="a" style="left:64.8px;top:527px;width:15.8px;height:1.2px;background:#7da3cc"></div>
<!-- powerpoint -->
<svg style="left:89.5px;top:515.4px" width="10" height="10" viewBox="0 0 10 10"><circle cx="5" cy="5" r="4.8" fill="#d24a2a"/><path d="M5 0.2A4.8 4.8 0 0 1 9.8 5H5z" fill="#f08a68"/><text x="2.6" y="7" font-size="5" font-weight="bold" font-family="Liberation Sans, sans-serif" fill="#fff">P</text></svg>
<div class="a" style="left:85.6px;top:527px;width:15.8px;height:1.2px;background:#7da3cc"></div>
<!-- tray -->
<svg style="left:704.5px;top:517.6px" width="8" height="5" viewBox="0 0 8 5"><path d="M0.6 4.4L4 1L7.4 4.4" fill="none" stroke="#fff" stroke-width="0.8"/></svg>
<svg style="left:718.6px;top:515.4px" width="6" height="10" viewBox="0 0 6 10"><rect x="1.4" y="0.2" width="3.2" height="3" fill="#f2f2f2"/><rect x="0.6" y="3" width="4.8" height="4" rx="0.8" fill="#f2f2f2"/><path d="M3 7v1.6" stroke="#ddd" stroke-width="1"/><circle cx="3" cy="9" r="0.9" fill="#ddd"/></svg>
<svg style="left:730.6px;top:517px" width="10" height="6" viewBox="0 0 10 6"><rect x="1.6" y="0.6" width="8" height="4.8" fill="#f2f2f2"/><rect x="0.2" y="1" width="1.4" height="2.2" fill="#f2f2f2"/></svg>
<svg style="left:744.4px;top:515.6px" width="9" height="9" viewBox="0 0 9 9"><path d="M0.8 8.4A7.4 7.4 0 0 1 8.2 1" fill="none" stroke="#bbb" stroke-width="0.9"/><path d="M3.2 8.4A5 5 0 0 1 8.2 3.4" fill="none" stroke="#bbb" stroke-width="0.9"/><path d="M5.6 8.4A2.6 2.6 0 0 1 8.2 5.8" fill="none" stroke="#bbb" stroke-width="0.9"/><circle cx="7.6" cy="7.8" r="0.8" fill="#ddd"/></svg>
<svg style="left:757.4px;top:516.4px" width="10" height="8" viewBox="0 0 10 8"><path d="M0.4 2.8h1.4L3.8 0.8v6.4L1.8 5.2H0.4z" fill="none" stroke="#ddd" stroke-width="0.7"/><path d="M5.8 2.6L8.6 5.4M8.6 2.6L5.8 5.4" stroke="#ddd" stroke-width="0.7"/></svg>
<div class="t" style="left:771.8px;top:516.6px;font-size:7.4px;color:#fff">中</div>
<svg style="left:787.4px;top:516px" width="9" height="9" viewBox="0 0 9 9"><rect x="0" y="0" width="9" height="9" rx="1.8" fill="#f0582a"/><text x="1.9" y="7.2" font-size="7.2" font-weight="bold" font-family="Liberation Sans, sans-serif" fill="#fff">S</text></svg>
<div class="t" style="left:805px;top:516.8px;font-size:7.3px;color:#fff">14:45</div>
<svg style="left:834px;top:516px" width="9" height="9" viewBox="0 0 9 9"><path d="M0.5 0.6h7.6v5.6H4.4L2.4 8V6.2H0.5z" fill="#f4f4f4"/><path d="M1.8 2.2h5M1.8 3.6h5" stroke="#333" stroke-width="0.6"/><circle cx="7.2" cy="7" r="1.5" fill="#333" stroke="#eee" stroke-width="0.6"/></svg>
<div class="a" style="left:853.6px;top:511.6px;width:0.6px;height:16.4px;background:#555"></div>
<!-- bottom-left caption -->
<div class="a" style="left:0;top:567.4px;width:59px;height:8.6px;background:#0d0e0f"></div>
<svg style="left:1.2px;top:568.6px" width="6" height="6" viewBox="0 0 6 6"><rect x="0.2" y="0.4" width="5.6" height="3.8" rx="0.5" fill="#fff"/><path d="M2 2.9L3 1.6L4 2.9z" fill="#222"/><path d="M1.4 5.4h3.2M3 4.2v1.2" stroke="#fff" stroke-width="0.7"/></svg>
<svg style="left:8.6px;top:568.4px" width="5" height="7" viewBox="0 0 5 7"><rect x="1.5" y="0.2" width="2" height="3.8" rx="1" fill="#e8e8e8"/><path d="M0.5 3.2a2 2 0 0 0 4 0M2.5 5.2v1.2M1.2 6.5h2.6" fill="none" stroke="#e8e8e8" stroke-width="0.6"/></svg>
<div class="t" style="left:15.4px;top:569.2px;font-size:5.4px;color:#fff">马琳伟的屏幕共享</div>

<!-- ===== Right participant panel ===== -->
<div class="a" style="left:857px;top:0;width:167px;height:576px;background:linear-gradient(90deg,#4d5253 0,#464a4b 6%,#3c4041 25%,#1c1e1e 70%,#060707 100%)"></div>
<div class="a" style="left:1020.7px;top:0;width:3.3px;height:576px;background:#070808"></div>
<div class="a" style="left:861px;top:8.8px;width:159.7px;height:89.4px;background:#26282a;box-shadow:inset 0 0 0 0.8px #1f3d35"></div>
<div class="a" style="left:861px;top:102.5px;width:159.7px;height:89.4px;background:#26282a"></div>
<div class="a" style="left:861px;top:196.2px;width:159.7px;height:89.3px;background:#26282a"></div>
<div class="a" style="left:861px;top:289.9px;width:159.7px;height:88.7px;background:#26282a"></div>
<div class="a" style="left:861px;top:383.6px;width:159.7px;height:88.8px;background:#26282a"></div>
<div class="a" style="left:861px;top:477.3px;width:159.7px;height:89.4px;background:#26282a"></div>
<svg style="left:0;top:0" width="1024" height="576" viewBox="0 0 1024 576">
<defs>
<clipPath id="c0"><circle cx="940.2" cy="51.2" r="19.9"/></clipPath>
<clipPath id="c1"><circle cx="940.2" cy="144.8" r="19.9"/></clipPath>
<clipPath id="c2"><circle cx="940.2" cy="238.2" r="19.9"/></clipPath>
<clipPath id="c3"><circle cx="940.2" cy="331.7" r="19.9"/></clipPath>
<clipPath id="c4"><circle cx="940.2" cy="425.2" r="19.9"/></clipPath>
<clipPath id="c5"><circle cx="940.2" cy="518.7" r="19.9"/></clipPath>
<linearGradient id="g2" x1="0" y1="0" x2="0.6" y2="1"><stop offset="0" stop-color="#d6ad60"/><stop offset="0.45" stop-color="#c0924f"/><stop offset="0.8" stop-color="#96693c"/><stop offset="1" stop-color="#8a5c3c"/></linearGradient>
<linearGradient id="g4" x1="0" y1="0" x2="0" y2="1"><stop offset="0" stop-color="#9da3ad"/><stop offset="0.2" stop-color="#c4c6c8"/><stop offset="0.36" stop-color="#e9e4d3"/><stop offset="0.45" stop-color="#efe9d6"/><stop offset="0.48" stop-color="#8e98ae"/><stop offset="0.56" stop-color="#4a5468"/><stop offset="0.64" stop-color="#2b2f34"/><stop offset="1" stop-color="#1e2021"/></linearGradient>
<radialGradient id="g5" cx="0.55" cy="0.4" r="0.65"><stop offset="0" stop-color="#3b7189"/><stop offset="1" stop-color="#1f4252"/></radialGradient>
<filter id="tx" x="0" y="0" width="100%" height="100%"><feTurbulence type="fractalNoise" baseFrequency="0.035" numOctaves="3" seed="4" result="n"/><feColorMatrix in="n" type="matrix" values="0 0 0 0 0.2  0 0 0 0 0.14  0 0 0 0 0.06  0.9 0.9 0 0 -0.62"/><feComposite operator="in" in2="SourceGraphic"/></filter>
<filter id="b1"><feGaussianBlur stdDeviation="6"/></filter>
<filter id="b2"><feGaussianBlur stdDeviation="3"/></filter>
</defs>
<g clip-path="url(#c0)"><g transform="translate(910,22) scale(0.1041667)"><rect x="80" y="70" width="420" height="420" fill="#fbf8f6"/><g filter="url(#b2)"><ellipse cx="205" cy="195" rx="52" ry="36" fill="#e9a194" transform="rotate(-20 205 195)"/><ellipse cx="312" cy="160" rx="44" ry="68" fill="#eaa093" transform="rotate(18 312 160)"/><ellipse cx="308" cy="170" rx="18" ry="40" fill="#f7ddd6" transform="rotate(18 308 170)"/><ellipse cx="405" cy="195" rx="55" ry="38" fill="#e9a194" transform="rotate(22 405 195)"/><ellipse cx="190" cy="312" rx="26" ry="46" fill="#e28672"/><ellipse cx="412" cy="305" rx="34" ry="50" fill="#e07f6c"/><ellipse cx="385" cy="365" rx="20" ry="30" fill="#e8a090"/><ellipse cx="300" cy="235" rx="78" ry="38" fill="#cdd3ce"/><ellipse cx="318" cy="305" rx="58" ry="44" fill="#f6e4da"/><ellipse cx="296" cy="298" rx="12" ry="15" fill="#d26a58"/><ellipse cx="350" cy="298" rx="12" ry="15" fill="#d77a68"/><path d="M232 330L205 430M262 345L250 445M380 380L392 440M300 360L296 450" stroke="#a9a9a9" stroke-width="7" fill="none"/></g></g></g>
<g clip-path="url(#c1)"><g transform="translate(910,115) scale(0.1041667)"><rect x="80" y="70" width="420" height="440" fill="url(#g2)"/><g filter="url(#b1)"><ellipse cx="180" cy="275" rx="80" ry="55" fill="#dcb874" opacity="0.45"/><ellipse cx="335" cy="292" rx="95" ry="44" fill="#473822" transform="rotate(24 335 292)"/><ellipse cx="288" cy="228" rx="34" ry="24" fill="#54432a"/><ellipse cx="240" cy="402" rx="88" ry="30" fill="#372b1a" transform="rotate(-14 240 402)"/><ellipse cx="400" cy="345" rx="42" ry="16" fill="#5a452a"/><ellipse cx="300" cy="470" rx="120" ry="26" fill="#a06e4c" opacity="0.8"/></g><path d="M195 160h45M205 185h32M170 262h30" stroke="#6a5230" stroke-width="7" opacity="0.8"/><rect x="80" y="70" width="420" height="440" fill="#000" filter="url(#tx)"/></g></g>
<g clip-path="url(#c2)"><g transform="translate(910,208) scale(0.1041667)"><rect x="80" y="70" width="420" height="440" fill="#f7f8f7"/><rect x="80" y="232" width="420" height="26" fill="#4d6b50"/><rect x="80" y="252" width="420" height="200" fill="#2f5a2d"/><ellipse cx="150" cy="330" rx="70" ry="50" fill="#3e6e39" filter="url(#b1)"/><path d="M340 262L500 262V470H350z" fill="#6d7278"/><path d="M365 258H500V345z" fill="#eef0ee"/><path d="M395 262v36M425 262v52M455 262v66" stroke="#9aa09c" stroke-width="5"/><path d="M80 440H500V520H80z" fill="#222527"/><path d="M196 300Q205 262 250 258H330Q358 262 352 300L368 425L338 432L335 452H228L224 370L150 408L128 380z" fill="#f4f6ee"/><path d="M236 368H330V452H232z" fill="#e4efa6"/><rect x="226" y="446" width="112" height="28" fill="#1b1d1e"/><rect x="284" y="235" width="34" height="30" fill="#d69c82"/><ellipse cx="299" cy="218" rx="32" ry="38" fill="#dca78d"/><path d="M264 212Q258 156 300 156Q340 156 336 212Q300 186 264 212z" fill="#26221f"/></g></g>
<g clip-path="url(#c3)"><g transform="translate(910,302) scale(0.1041667)"><rect x="80" y="70" width="420" height="440" fill="url(#g4)"/><g filter="url(#b1)"><ellipse cx="245" cy="128" rx="90" ry="26" fill="#e2e2e0" opacity="0.75"/><ellipse cx="390" cy="175" rx="90" ry="20" fill="#a0a5ae" opacity="0.6"/><ellipse cx="170" cy="205" rx="70" ry="16" fill="#b4b6ba" opacity="0.5"/></g><path d="M80 290L200 282L330 270L400 280L500 284V306H80z" fill="#74819c"/><g filter="url(#b2)"><ellipse cx="140" cy="345" rx="34" ry="10" fill="#9aa0a4"/><ellipse cx="200" cy="397" rx="62" ry="9" fill="#c6c8c6"/><ellipse cx="240" cy="447" rx="52" ry="18" fill="#a9a9a2"/><ellipse cx="360" cy="372" rx="60" ry="10" fill="#3a4046"/></g></g></g>
<g clip-path="url(#c4)"><g transform="translate(910,395) scale(0.1041667)"><rect x="80" y="70" width="420" height="440" fill="url(#g5)"/><g filter="url(#b2)"><path d="M170 300Q130 230 175 170Q215 100 300 100Q390 95 425 150Q460 210 440 280Q420 320 395 300L380 200H240L215 310z" fill="#9c4a33"/><path d="M340 105Q420 110 440 190Q452 260 420 300L395 290L385 190z" fill="#5b2d1f"/><ellipse cx="310" cy="252" rx="72" ry="84" fill="#eecbb8"/><path d="M236 240Q240 150 340 150Q290 190 236 240z" fill="#a04c34"/><path d="M340 150Q395 170 386 250Q370 190 340 150z" fill="#6a3424"/><ellipse cx="268" cy="222" rx="14" ry="8" fill="#5a4a44"/><ellipse cx="352" cy="224" rx="14" ry="8" fill="#5a4a44"/><ellipse cx="258" cy="262" rx="18" ry="12" fill="#e6a898" opacity="0.8"/><ellipse cx="365" cy="262" rx="16" ry="12" fill="#e6a898" opacity="0.8"/><ellipse cx="314" cy="293" rx="13" ry="8" fill="#b0403a"/><path d="M286 325H342L350 410H278z" fill="#e7c2ac"/><path d="M130 520Q140 400 270 385Q314 420 356 385Q470 400 480 520z" fill="#131a20"/></g><path d="M165 432Q310 385 455 432" stroke="#d8d070" stroke-width="18" fill="none" stroke-dasharray="18 20"/><path d="M180 455Q310 415 440 455" stroke="#eef2f2" stroke-width="12" fill="none" stroke-dasharray="16 22"/></g></g>
<g clip-path="url(#c5)"><g transform="translate(910,489) scale(0.1041667)"><rect x="80" y="70" width="420" height="440" fill="#fdfdfd"/><path d="M236 110L214 445M240 180L236 300" stroke="#c4c4c4" stroke-width="5" fill="none"/><path d="M240 300Q222 190 300 176Q372 180 382 262Q384 330 340 372Q296 392 262 350Q244 326 240 300" stroke="#a4a4a4" stroke-width="6" fill="none"/><path d="M246 232Q300 190 374 232" stroke="#b8b8b8" stroke-width="5" fill="none"/><path d="M256 270h34M322 270h34M292 312h28M282 340Q306 356 330 340" stroke="#8e8e8e" stroke-width="6" fill="none"/><path d="M262 360L270 470M345 372Q380 410 450 420" stroke="#d0d0d0" stroke-width="5" fill="none"/></g></g>
</svg>
<div class="nm" style="top:90.4px;width:51px;height:7.8px"></div>
<svg style="left:861.4px;top:91.2px" width="6" height="6" viewBox="0 0 6 6"><rect x="0.2" y="0.4" width="5.6" height="3.8" rx="0.5" fill="#fff"/><path d="M2 2.9L3 1.6L4 2.9z" fill="#222"/><path d="M1.4 5.4h3.2M3 4.2v1.2" stroke="#fff" stroke-width="0.7"/></svg>
<svg style="left:869px;top:90.8px" width="5" height="7" viewBox="0 0 5 7"><rect x="1.5" y="0.2" width="2" height="3.8" rx="1" fill="#a9dcae"/><path d="M0.5 3.2a2 2 0 0 0 4 0M2.5 5.2v1.2M1.2 6.5h2.6" fill="none" stroke="#a9dcae" stroke-width="0.6"/></svg>
<div class="t nt" style="left:876.8px;top:92.2px;font-size:4.25px">马琳伟的屏幕共享</div>
<div class="nm" style="top:184px;width:19px;height:7.9px"></div><svg style="left:862.4px;top:184.5px" width="6" height="7" viewBox="0 0 6 7"><rect x="2" y="0.3" width="2" height="3.8" rx="1" fill="#f0e6e6"/><path d="M0.9 3.2a2.1 2.1 0 0 0 4.2 0M3 5.3v1.2" fill="none" stroke="#f0e6e6" stroke-width="0.6"/><path d="M0.6 6L5.2 0.8" stroke="#e8455a" stroke-width="0.8"/></svg>
<div class="t nt" style="left:870.3px;top:185.7px">胡崧</div>
<div class="nm" style="top:277.6px;width:19px;height:7.9px"></div><svg style="left:862.4px;top:278.1px" width="6" height="7" viewBox="0 0 6 7"><rect x="2" y="0.3" width="2" height="3.8" rx="1" fill="#f0e6e6"/><path d="M0.9 3.2a2.1 2.1 0 0 0 4.2 0M3 5.3v1.2" fill="none" stroke="#f0e6e6" stroke-width="0.6"/><path d="M0.6 6L5.2 0.8" stroke="#e8455a" stroke-width="0.8"/></svg>
<div class="t nt" style="left:870.3px;top:279.3px">杨红</div>
<div class="nm" style="top:370.6px;width:23.4px;height:8px"></div><svg style="left:862.4px;top:371.1px" width="6" height="7" viewBox="0 0 6 7"><rect x="2" y="0.3" width="2" height="3.8" rx="1" fill="#f0e6e6"/><path d="M0.9 3.2a2.1 2.1 0 0 0 4.2 0M3 5.3v1.2" fill="none" stroke="#f0e6e6" stroke-width="0.6"/><path d="M0.6 6L5.2 0.8" stroke="#e8455a" stroke-width="0.8"/></svg>
<div class="t nt" style="left:871px;top:372.3px;font-size:4.1px">王成刚</div>
<div class="a" style="left:860.6px;top:463.9px;width:8.5px;height:8.5px;background:linear-gradient(#f08a3c,#ffb66e)"></div>
<svg style="left:862.3px;top:465.2px" width="5" height="6" viewBox="0 0 5 6"><circle cx="2.5" cy="1.6" r="1.3" fill="#fff3e4"/><path d="M0.2 5.6Q0.4 3.2 2.5 3.2Q4.6 3.2 4.8 5.6z" fill="#fff3e4"/></svg>
<div class="nm" style="left:869.1px;top:464.4px;width:30px;height:8px"></div><svg style="left:870.6px;top:464.9px" width="6" height="7" viewBox="0 0 6 7"><rect x="2" y="0.3" width="2" height="3.8" rx="1" fill="#f0e6e6"/><path d="M0.9 3.2a2.1 2.1 0 0 0 4.2 0M3 5.3v1.2" fill="none" stroke="#f0e6e6" stroke-width="0.6"/><path d="M0.6 6L5.2 0.8" stroke="#e8455a" stroke-width="0.8"/></svg>
<div class="t nt" style="left:878.8px;top:466.1px">机工 杨柳</div>
<div class="nm" style="top:558.9px;width:27px;height:7.8px"></div><svg style="left:862.4px;top:559.4px" width="6" height="7" viewBox="0 0 6 7"><rect x="2" y="0.3" width="2" height="3.8" rx="1" fill="#f0e6e6"/><path d="M0.9 3.2a2.1 2.1 0 0 0 4.2 0M3 5.3v1.2" fill="none" stroke="#f0e6e6" stroke-width="0.6"/><path d="M0.6 6L5.2 0.8" stroke="#e8455a" stroke-width="0.8"/></svg>
<div class="t nt" style="left:870.6px;top:560.6px;font-size:4.5px">zx62001</div>

<!-- ===== Floating "speaking" bar ===== -->
<div class="a" style="left:774.6px;top:51.4px;width:98.4px;height:13.8px;background:#2c2f33;border-radius:2px"></div>
<div class="a" style="left:859px;top:51.4px;width:14px;height:13.8px;background:#3a3d40;border-radius:0 2px 2px 0"></div>
<svg style="left:779.4px;top:54.4px" width="6" height="8" viewBox="0 0 6 8"><rect x="0" y="0" width="6" height="8" fill="#3a2a26"/><ellipse cx="3" cy="2.8" rx="1.6" ry="2" fill="#c79a7c"/><path d="M0.4 8Q0.6 5 3 5Q5.4 5 5.6 8z" fill="#8a5a50"/></svg>
<div class="t" style="left:793px;top:55.6px;font-size:4.95px;color:#fff">正在讲话: 马琳伟;</div>
<svg style="left:849.5px;top:53.6px" width="18" height="9" viewBox="0 0 18 9"><path d="M1 6.6L4 3L6 5.4L9 1.8L12 5.4L14 3L17 6.6" fill="none" stroke="#55595d" stroke-width="2.2" stroke-linejoin="round" stroke-linecap="round"/></svg>

</div>
</body>
</html>
